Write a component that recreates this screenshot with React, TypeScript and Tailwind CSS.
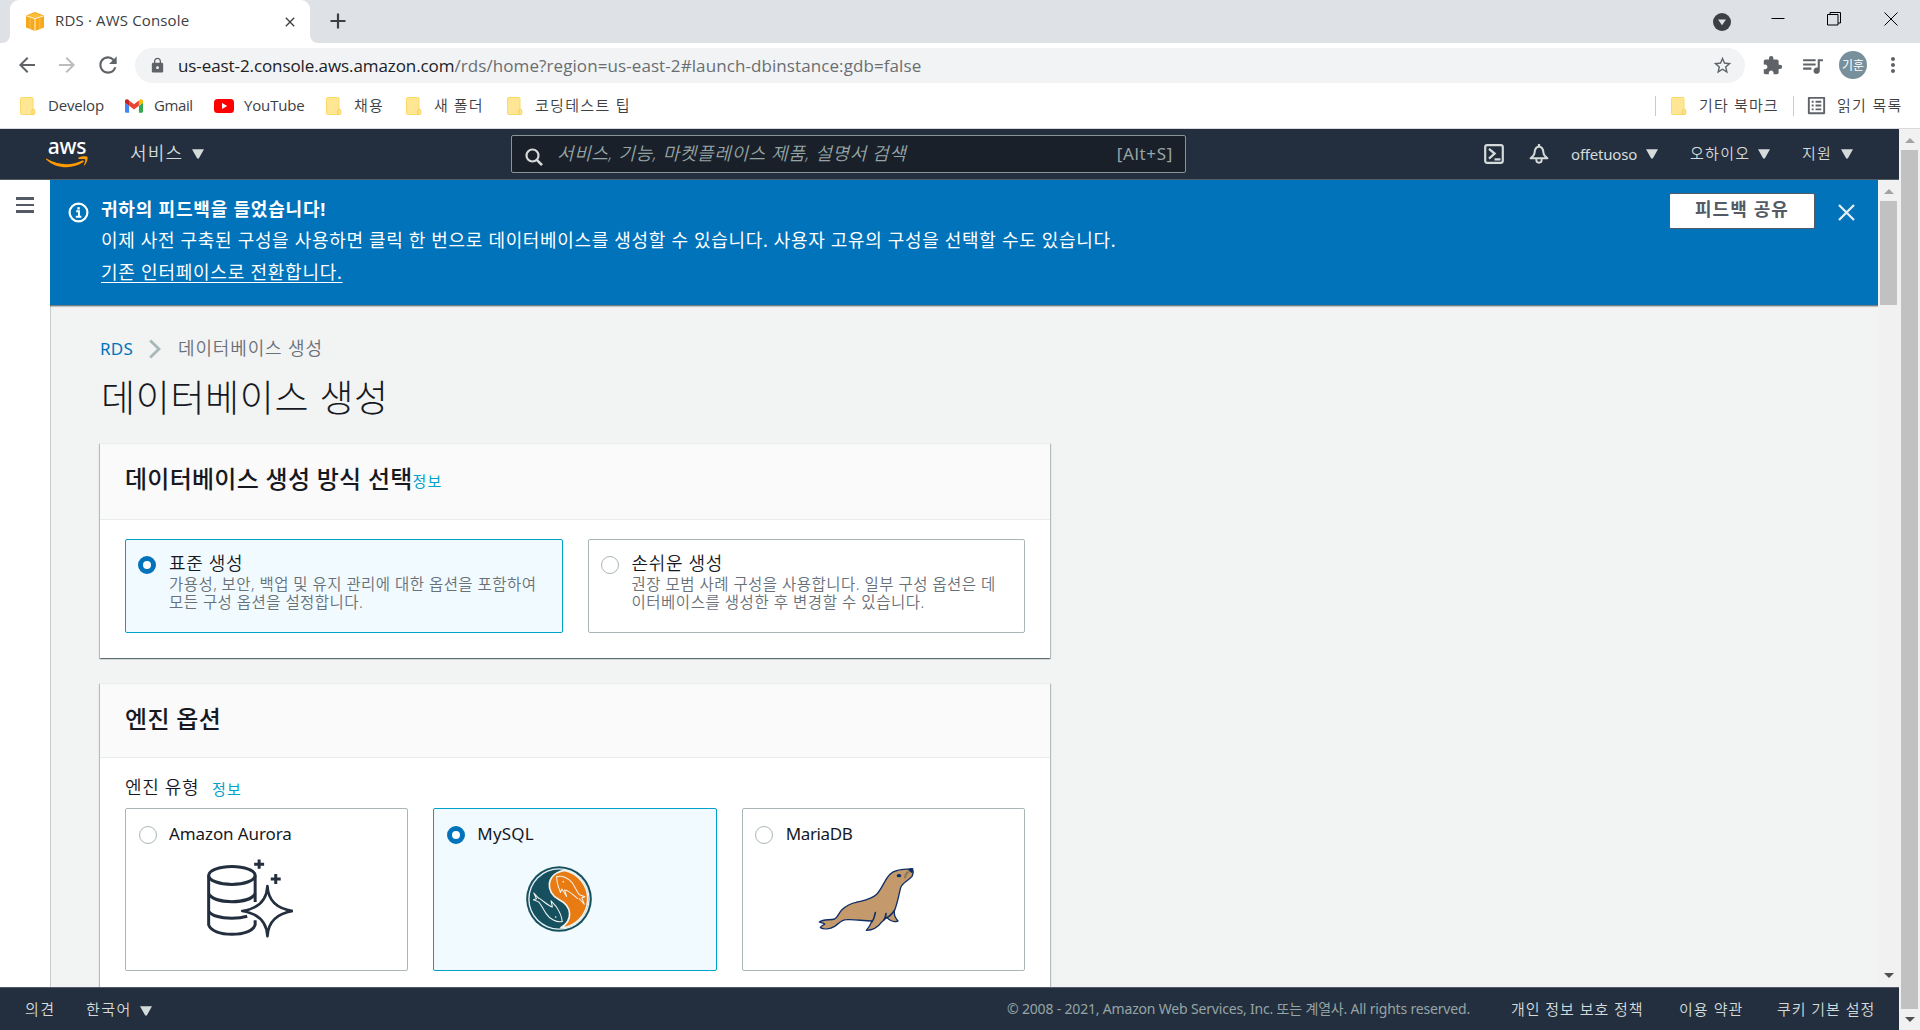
import type { ReactNode } from "react";
import {
  MdArrowBack,
  MdArrowForward,
  MdClose,
  MdExtension,
  MdListAlt,
  MdLock,
  MdMoreVert,
  MdQueueMusic,
  MdRefresh,
  MdStarBorder,
} from "react-icons/md";

function FolderIcon() {
  return (
    <svg width="16" height="18" viewBox="0 0 16 18" className="shrink-0">
      <path d="M1.5 .5h10.5a1 1 0 0 1 1 1v11h-1v5H1.5a1 1 0 0 1-1-1v-15a1 1 0 0 1 1-1z" fill="#ffe694" stroke="#fbd968" />
      <path d="M12 17.5v-3.700a1.400 1.400 0 0 1 2.800 0v2.400a1.300 1.300 0 0 1-1.300 1.300z" fill="#ffe694" stroke="#f5cf55" />
    </svg>
  );
}

function GmailIcon() {
  return (
    <svg width="18" height="14" viewBox="52 42 88 66" className="shrink-0">
      <path fill="#4285f4" d="M58 108h14V74L52 59v43c0 3.320 2.690 6 6 6" />
      <path fill="#34a853" d="M120 108h14c3.320 0 6-2.690 6-6V59l-20 15" />
      <path fill="#fbbc04" d="M120 48v26l20-15v-8c0-7.420-8.470-11.650-14.400-7.200" />
      <path fill="#ea4335" d="M72 74V48l24 18 24-18v26L96 92" />
      <path fill="#c5221f" d="M52 51v8l20 15V48l-5.600-4.200c-5.940-4.450-14.400-.22-14.400 7.200" />
    </svg>
  );
}

function YouTubeIcon() {
  return (
    <svg width="20" height="14" viewBox="0 0 20 14" className="shrink-0">
      <rect width="20" height="14" rx="3.500" fill="#f00" />
      <path d="M8 4l5.200 3L8 10z" fill="#fff" />
    </svg>
  );
}

function CubeIcon() {
  return (
    <svg width="18" height="19" viewBox="0 0 18 19" className="shrink-0">
      <path d="M0 3.400L9 0l9 3.400v12L9 19l-9-3.600z" fill="#f7a81b" />
      <path d="M1.500 3.800L9 1.200l7.500 2.600L9 6z" fill="#fbbf3a" />
      <path d="M.5 3.900L9 6.600l8.500-2.700M9 6.600V19" fill="none" stroke="#fff" strokeWidth=".9" />
      <path d="M4.200 5.500v11.500M13.800 5.500v11.500" fill="none" stroke="#fbc766" strokeWidth=".7" />
    </svg>
  );
}

function Caret() {
  return (
    <svg width="12" height="10" viewBox="0 0 12 10" className="shrink-0">
      <path d="M0 .3h12L6.800 9.600H5.200z" fill="#d5dbdb" />
    </svg>
  );
}

function ScrollArrow({ down = false, dark = false }: { down?: boolean; dark?: boolean }) {
  return (
    <svg width="10" height="5" viewBox="0 0 10 5" className="shrink-0">
      <path d={down ? "M0 0h10L5 5z" : "M0 5h10L5 0z"} fill={dark ? "#505050" : "#a3a3a3"} />
    </svg>
  );
}

function TabStrip() {
  return (
    <div className="flex h-[43px] shrink-0 bg-[#dee1e6]">
      <div className="flex h-[43px] w-[10px] items-end bg-white">
        <div className="h-full w-full rounded-br-[8px] bg-[#dee1e6]" />
      </div>
      <div className="h-full bg-[#dee1e6]">
        <div className="flex h-full w-[300px] items-center rounded-t-[9px] bg-white pl-[16px] pr-[12px]">
          <CubeIcon />
          <span className="ml-[11px] mt-[-3px] w-[227px] whitespace-nowrap text-[15px] leading-5 tracking-[0.16px] text-[#3c4043] [font-family:'Open_Sans',sans-serif]">
            RDS · AWS Console
          </span>
          <MdClose className="size-[16px] shrink-0 text-[#3c4043]" />
        </div>
      </div>
      <div className="h-[43px] w-[8px] bg-white">
        <div className="h-full w-full rounded-bl-[8px] bg-[#dee1e6]" />
      </div>
      <svg width="16" height="16" viewBox="0 0 16 16" className="ml-[12px] mt-[13px]">
        <path d="M8 .5v15M.5 8h15" stroke="#3c4043" strokeWidth="2.200" />
      </svg>
      <div className="ml-auto flex">
        <svg width="18" height="18" viewBox="0 0 18 18" className="mr-[40px] mt-[13px]">
          <circle cx="9" cy="9" r="9" fill="#3c4043" />
          <path d="M5 6.500h8l-4 5.700z" fill="#dee1e6" />
        </svg>
        <svg width="14" height="14" viewBox="0 0 14 14" className="mr-[42px] mt-[12px]">
          <path d="M.5 6.500h13" stroke="#000" />
        </svg>
        <svg width="14" height="14" viewBox="0 0 14 14" className="mr-[43px] mt-[12px]">
          <path d="M.5 2.500h10.500v10.500H.5zM3 2.500V.5h10.500v10.500h-2.500" fill="none" stroke="#000" />
        </svg>
        <svg width="14" height="14" viewBox="0 0 14 14" className="mr-[22px] mt-[12px]">
          <path d="M.5 .5l13 13M13.500 .5l-13 13" stroke="#000" />
        </svg>
      </div>
    </div>
  );
}

function Toolbar() {
  return (
    <div className="flex h-[44px] shrink-0 items-center bg-white">
      <MdArrowBack className="ml-[15px] size-[24px] text-[#5f6368]" />
      <MdArrowForward className="ml-[16px] size-[24px] text-[#babcbe]" />
      <MdRefresh className="ml-[16px] size-[26px] text-[#5f6368]" />
      <div className="ml-[14px] flex h-[35px] w-[1610px] items-center rounded-full bg-[#f1f3f4] pl-[14px] pr-[12px]">
        <MdLock className="size-[17px] text-[#5f6368]" />
        <div className="ml-[12px] mt-px flex-1 whitespace-nowrap text-[17px] leading-6 tracking-[0.03px] text-[#6a6e72] [font-family:'Open_Sans',sans-serif]">
          <span className="tracking-[-0.09px] text-[#202124]">us-east-2.console.aws.amazon.com</span>
          <span className="tracking-[0.09px]">/rds/home?region=us-east-2#launch-dbinstance:gdb=false</span>
        </div>
        <MdStarBorder className="size-[21px] text-[#5f6368]" />
      </div>
      <MdExtension className="ml-[17px] size-[21px] text-[#5f6368]" />
      <MdQueueMusic className="ml-[17px] size-[25px] text-[#5f6368]" />
      <div className="ml-[14px] flex size-[28px] items-center justify-center rounded-full bg-[#78909c] text-[12px] leading-none text-white [font-family:'Noto_Sans_CJK_KR',sans-serif]">
        기훈
      </div>
      <MdMoreVert className="ml-[14px] size-[24px] text-[#5f6368]" />
    </div>
  );
}

function Bookmark({ icon, gap, width, children }: { icon: ReactNode; gap: string; width: string; children: ReactNode }) {
  return (
    <div className={`flex shrink-0 items-center ${width}`}>
      {icon}
      <span className={`${gap} mt-[-2px] whitespace-nowrap`}>{children}</span>
    </div>
  );
}

function BookmarksBar() {
  return (
    <div className="flex h-[42px] shrink-0 items-center border-b border-[#d8dadd] bg-white pb-[4px] pl-[20px] text-[15px] leading-5 text-[#3c4043] [font-family:'Open_Sans','Noto_Sans_CJK_KR',sans-serif]">
      <Bookmark icon={<FolderIcon />} gap="ml-[12px] tracking-[-0.19px]" width="w-[105px]">Develop</Bookmark>
      <Bookmark icon={<GmailIcon />} gap="ml-[11px] tracking-[-0.4px]" width="w-[89px]">Gmail</Bookmark>
      <Bookmark icon={<YouTubeIcon />} gap="ml-[10px] tracking-[-0.15px]" width="w-[112px]">YouTube</Bookmark>
      <Bookmark icon={<FolderIcon />} gap="ml-[12px] tracking-[1.2px] font-[350]" width="w-[80px]">채용</Bookmark>
      <Bookmark icon={<FolderIcon />} gap="ml-[12px] tracking-[1.05px] font-[350]" width="w-[101px]">새 폴더</Bookmark>
      <Bookmark icon={<FolderIcon />} gap="ml-[12px] tracking-[1.32px] font-[350]" width="w-[150px]">코딩테스트 팁</Bookmark>
      <div className="ml-auto h-[20px] w-px bg-[#c8cacd]" />
      <div className="ml-[15px] flex w-[122px] items-center">
        <FolderIcon />
        <span className="ml-[12px] mt-[-2px] whitespace-nowrap tracking-[1.15px] font-[350]">기타 북마크</span>
      </div>
      <div className="h-[20px] w-px bg-[#c8cacd]" />
      <div className="ml-[11px] flex w-[115px] items-center">
        <MdListAlt className="size-[23px] shrink-0 text-[#5f6368]" />
        <span className="ml-[9px] mt-[-2px] whitespace-nowrap tracking-[1.31px] font-[350]">읽기 목록</span>
      </div>
    </div>
  );
}

function AwsLogo() {
  return (
    <div className="flex w-[44px] flex-col items-center">
      <span className="text-[21px] font-medium leading-[15px] tracking-[-0.3px] text-white [font-family:'Noto_Sans',sans-serif]">aws</span>
      <svg width="42" height="12" viewBox="0 0 42 12" className="mt-[2px]">
        <path d="M.4 2.600C12 9.600 26 9.800 36.400 4.600c1.300-.6 2.100.6.900 1.500C27.500 13.400 10 13.200.1 3.400c-.4-.5-.1-1 .3-.8z" fill="#f90" />
        <path d="M32.600 1.600c2.600-1.500 7.800-1.800 8.700-.8.900 1-.2 6.200-2.900 8.600-.4.4-.8.2-.6-.3.700-1.600 1.900-4.900 1.400-5.700-.6-.8-4.400-.5-6.200-.3-.7 0-.9-.9-.4-1.500z" fill="#f90" />
      </svg>
    </div>
  );
}

function ConsoleNav() {
  return (
    <div className="flex h-[51px] shrink-0 items-center border-b border-[#545b64] bg-[#232f3e] text-[#d5dbdb]">
      <div className="ml-[45px] mt-[-1px]"><AwsLogo /></div>
      <span className="ml-[41px] mt-[-2px] w-[62px] whitespace-nowrap text-[18px] font-[350] leading-6 tracking-[1.2px]">서비스</span>
      <Caret />
      <div className="ml-[307px] flex h-[38px] w-[675px] items-center rounded-[2px] border border-[#879596] bg-[#1a2029] pl-[13px] pr-[12px]">
        <svg width="19" height="19" viewBox="0 0 19 19" className="mt-[6px]">
          <circle cx="7.500" cy="7.500" r="6" fill="none" stroke="#d5dbdb" strokeWidth="2.200" />
          <path d="M11.800 11.800l5.200 5.400" stroke="#d5dbdb" strokeWidth="2.600" />
        </svg>
        <span className="ml-[13px] mt-[-2px] flex-1 whitespace-nowrap text-[18px] font-[350] italic leading-6 tracking-[0.62px] text-[#95a5a6]">
          서비스, 기능, 마켓플레이스 제품, 설명서 검색
        </span>
        <span className="whitespace-nowrap text-[17px] leading-6 tracking-[0.67px] text-[#95a5a6]">[Alt+S]</span>
      </div>
      <div className="ml-auto flex items-center text-[15px] leading-5">
        <svg width="20" height="20" viewBox="0 0 20 20" className="mr-[25px]">
          <rect x="1.200" y="1.200" width="17.600" height="17.600" rx="2" fill="none" stroke="#d5dbdb" strokeWidth="2.200" />
          <path d="M5 4.800l5.600 4.800L5 14.600M10.500 15.300h6" fill="none" stroke="#d5dbdb" strokeWidth="2.300" />
        </svg>
        <svg width="20" height="20" viewBox="0 0 20 20" className="mr-[22px]">
          <path d="M10 2.600C6.200 3 5.700 6.500 5.500 9c-.2 2.200-1.700 3.700-3.900 5.300h16.800C16.200 12.700 14.700 11.200 14.500 9c-.2-2.500-.7-6-4.500-6.400z" fill="none" stroke="#d5dbdb" strokeWidth="2" strokeLinejoin="round" />
          <path d="M10 0v3" stroke="#d5dbdb" strokeWidth="2.200" />
          <path d="M7.300 14.500v1.300a2.700 2.900 0 0 0 5.400 0v-1.300" fill="none" stroke="#d5dbdb" strokeWidth="1.900" />
        </svg>
        <span className="w-[75px] whitespace-nowrap tracking-[-0.2px]">offetuoso</span>
        <Caret />
        <span className="ml-[32px] mt-[-2px] w-[68px] whitespace-nowrap font-[350] tracking-[1.3px]">오하이오</span>
        <Caret />
        <span className="ml-[32px] mt-[-2px] w-[39px] whitespace-nowrap font-[350] tracking-[1.3px]">지원</span>
        <div className="mr-[46px] flex"><Caret /></div>
      </div>
    </div>
  );
}

function Banner() {
  return (
    <div className="z-10 flex h-[125px] shrink-0 bg-[#0073bb] text-white shadow-[0_1px_1px_0_rgba(0,28,36,0.45),0_2px_1px_0_rgba(0,28,36,0.15)]">
      <svg width="21" height="21" viewBox="0 0 21 21" className="ml-[18px] mt-[22px] shrink-0">
        <circle cx="10.500" cy="10.500" r="8.900" fill="none" stroke="#fff" strokeWidth="2.200" />
        <path d="M8.200 9.300h2.800v5.300M7.800 14.800h5.600" fill="none" stroke="#fff" strokeWidth="1.900" />
        <rect x="9.300" y="5.200" width="2.500" height="2.300" fill="#fff" />
      </svg>
      <div className="ml-[12px] flex flex-1 flex-col pt-[14px] text-[18px] leading-[31px]">
        <p className="whitespace-nowrap font-bold tracking-[0.8px]">귀하의 피드백을 들었습니다!</p>
        <p className="whitespace-nowrap tracking-[0.67px]">
          이제 사전 구축된 구성을 사용하면 클릭 한 번으로 데이터베이스를 생성할 수 있습니다. 사용자 고유의 구성을 선택할 수도 있습니다.
        </p>
        <a className="mt-px w-fit whitespace-nowrap tracking-[0.76px] underline decoration-1 underline-offset-[3px]">기존 인터페이스로 전환합니다.</a>
      </div>
      <button className="mt-[13px] flex h-[36px] w-[146px] items-center justify-center rounded-[2px] border border-[#545b64] bg-white pb-[4px] text-[18px] font-bold leading-6 tracking-[1.1px] text-[#545b64]">
        피드백 공유
      </button>
      <svg width="17" height="17" viewBox="0 0 17 17" className="ml-[23px] mr-[23px] mt-[24px] shrink-0">
        <path d="M1 1l15 15M16 1L1 16" stroke="#e4edf2" strokeWidth="2.300" />
      </svg>
    </div>
  );
}

function Radio({ checked = false }: { checked?: boolean }) {
  return checked ? (
    <span className="size-[18px] shrink-0 rounded-full border-[5.500px] border-[#0073bb] bg-white" />
  ) : (
    <span className="size-[18px] shrink-0 rounded-full border border-[#aab7b8] bg-white" />
  );
}

function MethodTile({ checked, title, lines }: { checked?: boolean; title: string; lines: [string, string][] }) {
  return (
    <div
      className={
        checked
          ? "flex h-[94px] flex-1 rounded-[2px] border border-[#00a1c9] bg-[#f1faff] pl-[12px] pt-[16px]"
          : "flex h-[94px] flex-1 rounded-[2px] border border-[#aab7b8] bg-white pl-[12px] pt-[16px]"
      }
    >
      <Radio checked={checked} />
      <div className="ml-[13px] mt-[-4px] whitespace-nowrap">
        <p className="mb-px text-[18px] font-[350] leading-[22px] tracking-[0.65px] text-[#16191f]">{title}</p>
        {lines.map(([text, tracking]) => (
          <p key={text} className={`text-[15.500px] font-[350] leading-[18px] text-[#687078] ${tracking}`}>{text}</p>
        ))}
      </div>
    </div>
  );
}

function EngineTile({ checked, name, nameClass, children }: { checked?: boolean; name: string; nameClass: string; children: ReactNode }) {
  return (
    <div
      className={
        checked
          ? "h-[163px] flex-1 rounded-[2px] border border-[#00a1c9] bg-[#f1faff] pl-[12.500px] pt-[16px]"
          : "h-[163px] flex-1 rounded-[2px] border border-[#aab7b8] bg-white pl-[12.500px] pt-[16px]"
      }
    >
      <div className="flex h-[19px] items-center">
        <Radio checked={checked} />
        <span className={`ml-[12.500px] mt-[-2px] whitespace-nowrap text-[17px] leading-6 text-[#16191f] ${nameClass}`}>{name}</span>
      </div>
      {children}
    </div>
  );
}

function AuroraLogo() {
  return (
    <svg width="86" height="79" viewBox="321 299 259 237" className="ml-[68.500px] mt-[15px]">
      <g fill="none" stroke="#232f3e" strokeWidth="9">
        <ellipse cx="396" cy="348" rx="70" ry="27" />
        <path d="M326 348v149c6 18 34 28 70 28s64-10 70-28v-14M466 348v80" />
        <path d="M326 403c8 14 34 24 70 24s62-10 70-24" />
        <path d="M326 456c8 12 34 21 70 21 17 0 33-2 46-6" />
        <path d="M478 300v28M463 314h30M528 344v30M513 359h30" />
        <path d="M503 380c2 42 26 68 76 75-50 8-74 34-76 76-2-42-26-68-76-76 50-7 74-33 76-75z" fill="#fff" strokeLinejoin="round" strokeWidth="8" />
      </g>
    </svg>
  );
}

function MySqlLogo() {
  return (
    <svg width="66" height="66" viewBox="1278 319 195 195" className="ml-[79px] mt-[22px]">
      <circle cx="1375.500" cy="416.500" r="97" fill="#16505f" />
      <circle cx="1375.500" cy="416.500" r="91" fill="#e8f1f5" />
      <circle cx="1375.500" cy="416.500" r="87" fill="#16505f" />
      <path d="M1392 332C1335 342 1335 398 1375 418S1418 480 1380 502A86 86 0 0 0 1392 332z" fill="#e97b13" stroke="#f3f3ee" strokeWidth="5" />
      <g fill="none" stroke="#f3f3ee" strokeWidth="3" strokeLinecap="round" strokeLinejoin="round">
        <path d="M1369 351c13-5 34 2 46 18 8 12 13 26 21 35l16 6-9 3 7 19-15-17" />
        <path d="M1369 351c-2 14 4 28 11 46l4-10 14 22-6-19c14 2 26 15 38 25" />
        <path d="M1388 364v3" />
        <path d="M1385 483c-16 4-38-8-48-24-8-12-14-26-22-34l-15-6 9-3-8-17 14 15" />
        <path d="M1316 414c14 8 26 22 40 26l-4-18 16 18c8 12 16 28 17 43M1366 468v3" />
      </g>
    </svg>
  );
}

function MariaDbLogo() {
  return (
    <svg width="96" height="64" viewBox="-2 -2 288 192" className="ml-[63px] mt-[23px]">
      <path
        d="M272 4C248 6 228 6 214 20C198 36 192 60 174 80C158 96 136 98 112 104C92 108 78 118 68 128C60 138 56 150 48 154C32 158 14 154 2 163C8 166 14 166 18 169C14 174 6 174 5 180C16 186 34 184 48 176C60 168 68 156 84 156C110 154 132 160 160 160C156 170 150 180 143 188C166 188 180 176 190 162C196 156 200 152 205 150C214 160 226 164 238 160C230 152 226 140 227 130C236 108 240 84 246 60C250 46 268 40 280 26C284 18 284 8 280 3z"
        fill="#c49a6c"
        stroke="#0f2f66"
        strokeWidth="4"
        strokeLinejoin="round"
      />
      <path d="M170 135c-3 12-4 20-10 27M202 138c-1 8-1 12-6 18M227 128c-6 10-14 18-24 22" fill="none" stroke="#0f2f66" strokeWidth="5" strokeLinecap="round" />
      <path d="M266 5l18-4-2 16c-6-1-8-6-16-12z" fill="#0f2f66" />
      <path d="M270 12c-8 6-12 12-10 20" fill="none" stroke="#8c7558" strokeWidth="6" />
      <ellipse cx="241" cy="24" rx="7" ry="5" fill="#0f2f66" />
    </svg>
  );
}

const cardShadow =
  "w-[950px] border-t border-[#eaeded] bg-white shadow-[0_1px_1px_0_rgba(0,28,36,0.4),1px_1px_1px_0_rgba(0,28,36,0.2),-1px_1px_1px_0_rgba(0,28,36,0.2)]";

function Content() {
  return (
    <div className="flex min-w-0 flex-1 flex-col overflow-hidden">
      <Banner />
      <main className="flex min-h-0 flex-1 flex-col overflow-hidden border-l border-[#c6cbcb] bg-[#f2f3f3] pl-[49px]">
        <nav className="mt-[32px] flex h-[24px] shrink-0 items-center text-[17px] leading-6">
          <span className="w-[49px] tracking-[0.2px] text-[#0073bb]">RDS</span>
          <svg width="12" height="20" viewBox="0 0 12 20">
            <path d="M1.200 1.500L10 10l-8.800 8.500" fill="none" stroke="#aab7b8" strokeWidth="2.800" />
          </svg>
          <span className="ml-[17px] mt-[-3px] whitespace-nowrap text-[18px] font-[350] tracking-[0.85px] text-[#687078]">데이터베이스 생성</span>
        </nav>
        <h1 className="ml-px mt-[15px] h-[44px] shrink-0 whitespace-nowrap text-[37px] font-light leading-[44px] tracking-[0.65px] text-[#16191f]">
          데이터베이스 생성
        </h1>
        <section className={`${cardShadow} mt-[23px] h-[215px] shrink-0`}>
          <header className="flex h-[76px] items-center border-b border-[#eaeded] bg-[#fafafa] pb-[6px] pl-[25px]">
            <h2 className="whitespace-nowrap text-[24px] font-medium leading-8 tracking-[0.26px] text-[#16191f]">데이터베이스 생성 방식 선택</h2>
            <a className="mt-[5px] whitespace-nowrap text-[15px] leading-5 tracking-[1.2px] text-[#00a1c9]">정보</a>
          </header>
          <div className="flex gap-[25px] pl-[25px] pr-[25px] pt-[19px]">
            <MethodTile
              checked
              title="표준 생성"
              lines={[
                ["가용성, 보안, 백업 및 유지 관리에 대한 옵션을 포함하여", "tracking-[0.45px]"],
                ["모든 구성 옵션을 설정합니다.", "tracking-[0.45px]"],
              ]}
            />
            <MethodTile
              title="손쉬운 생성"
              lines={[
                ["권장 모범 사례 구성을 사용합니다. 일부 구성 옵션은 데", "tracking-[0.47px]"],
                ["이터베이스를 생성한 후 변경할 수 있습니다.", "tracking-[0.53px]"],
              ]}
            />
          </div>
        </section>
        <section className={`${cardShadow} mt-[25px] h-[340px] shrink-0`}>
          <header className="flex h-[74px] items-center border-b border-[#eaeded] bg-[#fafafa] pb-[3px] pl-[25px]">
            <h2 className="whitespace-nowrap text-[24px] font-medium leading-8 tracking-[0.3px] text-[#16191f]">엔진 옵션</h2>
          </header>
          <div className="flex h-[50px] items-center pl-[25px] pt-[8px]">
            <span className="w-[87px] whitespace-nowrap text-[18px] font-[350] leading-6 tracking-[0.65px] text-[#16191f]">엔진 유형</span>
            <a className="mt-[3px] whitespace-nowrap text-[15px] leading-5 tracking-[1.2px] text-[#00a1c9]">정보</a>
          </div>
          <div className="flex gap-[25px] pl-[25px] pr-[25px]">
            <EngineTile name="Amazon Aurora" nameClass="tracking-[-0.1px]"><AuroraLogo /></EngineTile>
            <EngineTile checked name="MySQL" nameClass="tracking-[0.2px]"><MySqlLogo /></EngineTile>
            <EngineTile name="MariaDB" nameClass="tracking-[-0.35px]"><MariaDbLogo /></EngineTile>
          </div>
        </section>
      </main>
    </div>
  );
}

function Footer() {
  return (
    <footer className="flex h-[43px] shrink-0 items-center border-t border-[#545b64] bg-[#232f3e] pl-[25px] pr-[24px] text-[15px] leading-5 text-[#d5dbdb]">
      <span className="w-[61px] whitespace-nowrap font-[350] tracking-[1.5px]">의견</span>
      <span className="w-[54px] whitespace-nowrap font-[350] tracking-[1.5px]">한국어</span>
      <div className="mt-[3px] flex"><Caret /></div>
      <span className="ml-auto w-[504px] whitespace-nowrap text-[14px] tracking-[-0.18px] text-[#95a5a6]">
        © 2008 - 2021, Amazon Web Services, Inc. 또는 계열사. All rights reserved.
      </span>
      <span className="w-[168px] whitespace-nowrap font-[350] tracking-[0.94px]">개인 정보 보호 정책</span>
      <span className="w-[98px] whitespace-nowrap font-[350] tracking-[1.05px]">이용 약관</span>
      <span className="w-[98px] whitespace-nowrap font-[350] tracking-[0.95px]">쿠키 기본 설정</span>
    </footer>
  );
}

export default function App() {
  return (
    <div className="flex h-[1030px] w-[1920px] flex-col overflow-hidden bg-white">
      <TabStrip />
      <Toolbar />
      <BookmarksBar />
      <div className="flex min-h-0 flex-1 [font-family:'Noto_Sans','Noto_Sans_CJK_KR',sans-serif]">
        <div className="flex w-[1899px] flex-col">
          <ConsoleNav />
          <div className="flex min-h-0 flex-1">
            <aside className="w-[50px] shrink-0 bg-white">
              <div className="ml-[16px] mt-[17px] flex w-[18px] flex-col gap-[4px]">
                <div className="h-[2.500px] bg-[#545b64]" />
                <div className="h-[2.500px] bg-[#545b64]" />
                <div className="h-[2.500px] bg-[#545b64]" />
              </div>
            </aside>
            <Content />
            <div className="flex w-[21px] shrink-0 flex-col items-center bg-[#f1f1f1] pb-[9px] pt-[9px]">
              <ScrollArrow />
              <div className="mt-[7px] h-[104px] w-[17px] bg-[#c1c1c1]" />
              <div className="mt-auto flex"><ScrollArrow down dark /></div>
            </div>
          </div>
          <Footer />
        </div>
        <div className="flex w-[21px] flex-col items-center bg-[#f1f1f1] pb-[8px] pt-[9px]">
          <ScrollArrow />
          <div className="mt-[7px] h-[859px] w-[17px] bg-[#c1c1c1]" />
          <div className="mt-auto flex"><ScrollArrow down dark /></div>
        </div>
      </div>
    </div>
  );
}
